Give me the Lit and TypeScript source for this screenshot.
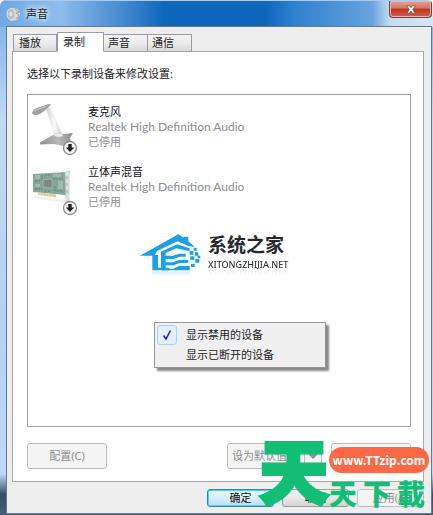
import { LitElement, html, css, svg } from "lit";
import { customElement, state } from "lit/decorators.js";

interface Device {
  name: string;
  driver: string;
  status: string;
  kind: "mic" | "card";
}

const badge = svg`
  <circle cx="39" cy="44" r="6.5" fill="#f4f4f4" stroke="#8a8a8a" stroke-width="1.3"/>
  <path d="M37.3 40h3.4v3.4h2.5L39 48l-4.2-4.6h2.5z" fill="#222"/>`;

const micIcon = html`<svg class="device-icon" viewBox="0 0 48 52" aria-hidden="true">
  <defs>
    <linearGradient id="arm" x1="0" x2="1"><stop offset="0" stop-color="#cfcfcf"/><stop offset=".5" stop-color="#fafafa"/><stop offset="1" stop-color="#d2d2d2"/></linearGradient>
    <linearGradient id="base" x1="0" x2="1"><stop offset="0" stop-color="#909090"/><stop offset=".55" stop-color="#b8b8b8"/><stop offset="1" stop-color="#8c8c8c"/></linearGradient>
  </defs>
  <path d="M9 38.500 22 31l20-2-3 5 1 5-7 3-10-2-14 .5z" fill="url(#base)"/>
  <path d="M15 4l3-1L31 30c0 3-6 4-7 1z" fill="url(#arm)" stroke="#d8d8d8" stroke-width=".5"/>
  <ellipse cx="27.500" cy="31" rx="4.500" ry="2" fill="#ededed" stroke="#b5b5b5" stroke-width=".5"/>
  <path d="M1 9C2 5 6 4 10 2.500L18 0l2 .8-4 3.700c-3 3-6 5-9 6.200-3 1-6 0-6-1.700z" fill="#a2a2a2"/>
  <path d="M3 7.500c3-3 7-3 12-5" stroke="#c9c9c9" fill="none"/>
  ${badge}
</svg>`;

const cardIcon = html`<svg class="device-icon" viewBox="0 0 48 52" aria-hidden="true">
  <path d="M3 32l32 4v3L3 34z" fill="#f0f0f0"/>
  <path d="M2 10l33-2v23L2 28z" fill="#83a697"/>
  <path d="M4 11h5v4H4zM22 10h8v3h-8zM27 17h5v8h-5zM4 20h5v3H4z" fill="#a0bcaf"/>
  <path d="M4 17h6M11 11v5M14 11h6M22 15h10M4 25h7M24 22v6M26 27h6M14 27h6" stroke="#5f8776" stroke-dasharray="2 1"/>
  <path d="M12 16l9-1v9l-9-1z" fill="#77837d" stroke="#b8cbc2" stroke-width=".6"/>
  <path d="M13 18h6M13 20h6M13 22h6" stroke="#a7b1ac" stroke-dasharray="1 1" stroke-width=".6"/>
  <path d="M7 28.500l18 2v3L7 31z" fill="#dcc78f"/>
  <path d="M9 29v3M12 29v3M15 30v3M18 30v3M21 30v3" stroke="#f3e9c6" stroke-width=".8"/>
  <path d="M34 8l5-1v2l-1 1v27l-3 1z" fill="#dfe2e4" stroke="#bcc0c3" stroke-width=".6"/>
  <path d="M36 12v3M36 19v3M36 26v3" stroke="#a0a7ab"/>
  ${badge}
</svg>`;

@customElement("app-root")
export class AppRoot extends LitElement {
  @state() private active = "录制";

  private tabs = ["播放", "录制", "声音", "通信"];
  private devices: Device[] = [
    { name: "麦克风", driver: "Realtek High Definition Audio", status: "已停用", kind: "mic" },
    { name: "立体声混音", driver: "Realtek High Definition Audio", status: "已停用", kind: "card" },
  ];

  static styles = css`
    :host {
      display: block;
      font-family: "Noto Sans", "Noto Sans CJK SC", sans-serif;
      font-size: 11px;
      line-height: 16px;
      color: #222;
    }
    * { box-sizing: border-box; }
    button { font: inherit; color: inherit; margin: 0; padding: 0; }
    .window {
      position: relative;
      display: flex;
      flex-direction: column;
      min-height: 100vh;
      padding: 0 1px 1px 6px;
      border-radius: 6px 6px 0 0;
      background:
        linear-gradient(90deg, #6fa8e3 0, #8fbcec 14%, #3c83cd 30%, #0f66bd 38%, #0f66bd 61%, #2f80d0 68%, #6aa3de 86%, #c5dbf1 90%, #d8e6f4 100%) top / 100% 27px no-repeat,
        linear-gradient(180deg, #7aade3 0, #8dbbef 40px, #c0dbf5 120px, #b4d3f3 60%, #bcd9f7 92%, #35506c 96%, #445d75 100%);
      overflow: hidden;
    }
    .titlebar {
      display: flex;
      align-items: center;
      height: 26px;
      gap: 6px;
      border-top: 1px solid #a9cbee;
    }
    .speaker { width: 14px; height: 14px; }
    h1 {
      flex: 1;
      margin: 0;
      font-size: 11px;
      font-weight: 400;
      text-shadow: 0 0 6px #fff, 0 0 6px #fff;
    }
    .close {
      align-self: flex-start;
      display: grid;
      place-items: center;
      width: 43px;
      height: 17px;
      border: 1px solid #6d4048;
      border-top: 0;
      border-radius: 0 0 4px 4px;
      background: linear-gradient(#e6a397, #d5715f 45%, #bb3320 50%, #d2634c);
      box-shadow: inset 0 0 0 1px #e9b3a8;
    }
    .close svg { width: 10px; height: 9px; }
    .client {
      flex: 1;
      display: flex;
      flex-direction: column;
      padding: 5px 7px 6px 5px;
      border: 1px solid #66788c;
      background: #eee;
    }
    .tabs { display: flex; align-items: flex-end; padding-left: 1px; height: 20px; }
    .tab {
      width: 44px;
      height: 18px;
      padding-left: 5px;
      text-align: left;
      border: 1px solid #999ca4;
      border-radius: 0;
      background: linear-gradient(#f4f4f4, #ececec 50%, #d9d9d9);
    }
    .tab + .tab { border-left: 0; padding-left: 4px; }
    .tab.tab.active {
      position: relative;
      width: 47px;
      height: 20px;
      padding: 0 0 0 5px;
      border-left: 1px solid #999ca4;
      border-bottom-color: #fff;
      background: #fff;
    }
    .panel {
      flex: 1;
      display: flex;
      flex-direction: column;
      margin-top: -1px;
      padding: 14px 12px 12px 14px;
      border: 1px solid #a5a7b0;
      background: #fff;
    }
    .prompt { margin: 0 0 12px; }
    .devices {
      flex: 1;
      margin: 0;
      padding: 9px 3px;
      border: 1px solid #9da0a8;
      list-style: none;
    }
    .device { display: flex; gap: 9px; height: 60px; line-height: 15px; }
    .device-icon { width: 48px; height: 52px; }
    .device p { margin: 0; color: #8b8b8b; }
    .device .name { color: #111; }
    .device .driver { font-family: Lato, sans-serif; font-size: 12px; }
    .actions { display: flex; gap: 9px; padding-top: 16px; }
    .actions .push:first-child { margin-right: auto; }
    .push {
      width: 80px;
      height: 26px;
      border: 1px solid #bcbcbc;
      border-radius: 3px;
      background: #f4f4f4;
      color: #8d8d8d;
    }
    .push.split { display: grid; grid-template-columns: 1fr 17px; width: 95px; align-items: center; }
    .split span:first-child { text-align: left; padding-left: 4px; }
    .arrow { display: grid; place-items: center; height: 24px; border-left: 1px solid #bcbcbc; }
    .arrow::after { content: ""; border: 5px solid transparent; border-top-color: #8f8f8f; border-bottom: 0; }
    .footer { display: flex; justify-content: flex-end; gap: 8px; padding-top: 7px; }
    .footer .push { width: 67px; height: 18px; line-height: 14px; }
    .footer .cancel { border-color: #9a9a9a; color: #222; background: linear-gradient(#f2f2f2, #e8e8e8 50%, #d4d4d4); }
    .footer .ok {
      border-color: #2f86b3;
      color: #111;
      background: linear-gradient(#eef8fd, #d9effa 50%, #b5def3);
      box-shadow: inset 0 0 0 1px #4fd0f5;
    }
    .menu {
      position: absolute;
      left: 154px;
      top: 322px;
      width: 172px;
      padding: 2px;
      border: 1px solid #979797;
      background: #f0f0f0;
      box-shadow: 3px 3px 2px #888;
    }
    .item {
      display: grid;
      grid-template-columns: 20px 1fr;
      gap: 9px;
      align-items: center;
      width: 100%;
      height: 20px;
      border: 0;
      background: none;
      text-align: left;
    }
    .check { height: 20px; display: grid; place-items: center; }
    .check.on { border: 1px solid #abd0f3; border-radius: 3px; background: #e6eff9; }
    .check svg { width: 10px; height: 12px; }
    .brand {
      position: absolute;
      left: 139px;
      top: 232px;
      display: flex;
      gap: 7px;
    }
    .house { width: 62px; height: 48px; }
    .brand-name { margin: 0; font-size: 19px; line-height: 26px; font-weight: 700; color: #25282c; }
    .brand-url { margin: 0; font-size: 9px; line-height: 14px; font-weight: 500; color: #33373b; -webkit-box-reflect: below -6px linear-gradient(transparent 30%, rgba(0, 0, 0, 0.2)); }
    .stamp {
      position: absolute;
      right: 4px;
      bottom: 6px;
      display: flex;
      align-items: flex-end;
      color: #12bd75;
      font-family: "Noto Sans CJK TC", sans-serif;
      font-weight: 900;
    }
    .stamp-big { width: 70px; font-size: 70px; line-height: 80px; text-align: center; -webkit-text-stroke: 3px #12bd75; }
    .stamp-side { display: flex; flex-direction: column; width: 100px; gap: 4px; }
    .stamp-url {
      height: 26px;
      border-radius: 13px;
      background: #ff6846;
      color: #fff;
      font: 700 12px/26px "Noto Sans CJK SC", sans-serif;
      text-align: center;
      text-decoration: none;
    }
    .stamp-text { display: flex; justify-content: space-between; width: 96px; font-size: 28px; line-height: 32px; }
  `;

  render() {
    return html`
      <main class="window">
        <header class="titlebar">
          <svg class="speaker" viewBox="0 0 14 14" aria-hidden="true">
            <path d="M1 4l5-3 6 1 2 5-3 6-6 1-4-4z" fill="#d6d9dc"/>
            <ellipse cx="5" cy="7" rx="4" ry="5.5" fill="#b9bdc1" stroke="#dcdfe2"/>
            <ellipse cx="5" cy="7" rx="1.600" ry="2.400" fill="#dfe2e5"/>
            <path d="M9 2l4 3-3 1 3 2-3 4" fill="none" stroke="#9ba1a7"/>
          </svg>
          <h1>声音</h1>
          <button class="close" aria-label="关闭">
            <svg viewBox="0 0 10 9" aria-hidden="true"><path d="M.8.8h2.600L5 2.800 6.600.8h2.600L6.700 4.500l2.500 3.700H6.600L5 6.200 3.400 8.200H.8L3.300 4.500z" fill="#fff" stroke="#5a4a50" stroke-width=".7"/></svg>
          </button>
        </header>
        <section class="client">
          <nav class="tabs" role="tablist">
            ${this.tabs.map((t) => html`<button role="tab" aria-selected=${t === this.active} class="tab ${t === this.active ? "active" : ""}" @click=${() => (this.active = t)}>${t}</button>`)}
          </nav>
          <div class="panel">
            <p class="prompt">选择以下录制设备来修改设置:</p>
            <ul class="devices">
              ${this.devices.map((d) => html`<li class="device">
                ${d.kind === "mic" ? micIcon : cardIcon}
                <div><p class="name">${d.name}</p><p class="driver">${d.driver}</p><p>${d.status}</p></div>
              </li>`)}
            </ul>
            <div class="actions">
              <button class="push" disabled>配置(C)</button>
              <button class="push split" disabled><span>设为默认值</span><span class="arrow"></span></button>
              <button class="push" disabled>属性(P)</button>
            </div>
          </div>
          <footer class="footer">
            <button class="push ok">确定</button>
            <button class="push cancel">取消</button>
            <button class="push" disabled>应用(A)</button>
          </footer>
        </section>
        <div class="brand">
          <svg class="house" viewBox="12 51 186 144" aria-hidden="true">
            <g fill="#1c9fe4">
              <path d="M15 122 130 58l16 10v-3h14v14l20 17-20-3-32-14-62 29-8 14z"/>
              <path d="M52 120h17v38h34v8H52z"/>
              <path d="M78 110l48-22 38 12v9l-40-9-32 14v8h22l18-6h20v9h-18l-18 7H92v10h22l18-7h28v9h-26l-18 7H92v10h22l18-8h32v13H78z"/>
              <path d="M164 108h11v11h-11zM176 98h9v9h-9zM180 112h10v10h-10zM166 124h12v11h-12zM181 132h12v11h-12zM168 146h11v10h-11zM188 122h8v8h-8z"/>
            </g>
            <path d="M52 169h112v10H52z" fill="#e5f3fb"/>
          </svg>
          <div><p class="brand-name">系统之家</p><p class="brand-url">XITONGZHIJIA.NET</p></div>
        </div>
        <div class="menu" role="menu">
          <button class="item" role="menuitemcheckbox" aria-checked="true">
            <span class="check on"><svg viewBox="0 0 10 12" aria-hidden="true"><path d="M1.500 6.500l2.500 3.500L8.500 1.500" fill="none" stroke="#2a22ad" stroke-width="1.600"/></svg></span>显示禁用的设备
          </button>
          <button class="item" role="menuitemcheckbox" aria-checked="false"><span class="check"></span>显示已断开的设备</button>
        </div>
        <div class="stamp">
          <span class="stamp-big">天</span>
          <div class="stamp-side">
            <a class="stamp-url" href="#">www.TTzip.com</a>
            <div class="stamp-text"><span>天</span><span>下</span><span>載</span></div>
          </div>
        </div>
      </main>
    `;
  }
}
